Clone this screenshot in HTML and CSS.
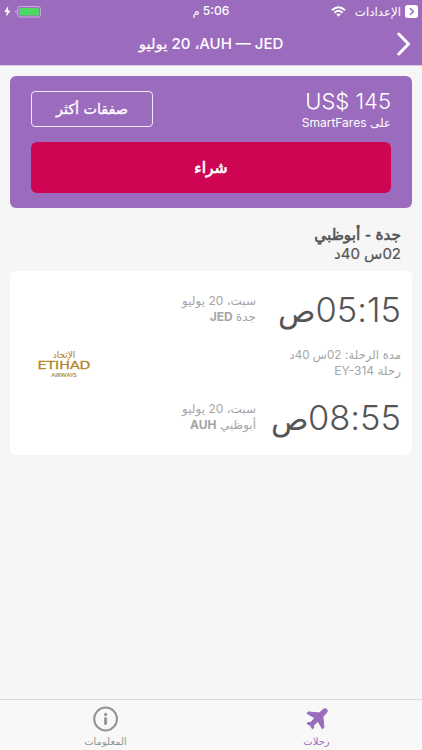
FILE: index.html
```html
<!DOCTYPE html>
<html lang="ar" dir="rtl">
<head>
  <meta charset="UTF-8" />
  <meta name="viewport" content="width=device-width, initial-scale=1.0" />
  <title>AUH — JED</title>
  <link rel="stylesheet" href="styles.css">
</head>
<body>
  <header class="header">
    <div class="status">
      <div class="status-side">
        <svg class="back-app" viewBox="0 0 13 13">
          <rect width="13" height="13" rx="2.5" fill="#fff" />
          <path d="M5 3.2L8.3 6.5L5 9.8" fill="none" stroke="#9b6cbd" stroke-width="1.6" />
        </svg>
        <span class="back-label">الإعدادات</span>
        <svg class="wifi" viewBox="0 0 15 11">
          <g fill="none" stroke="#fff" stroke-width="1.9">
            <path d="M1 4.2Q7.5 -1.9 14 4.2" />
            <path d="M3.4 6.7Q7.5 2.9 11.6 6.7" />
          </g>
          <path d="M5.2 8.3Q7.5 6.5 9.8 8.3L7.5 10.7Z" fill="#fff" />
        </svg>
      </div>
      <div class="clock">5:06 <span class="ar">م</span></div>
      <div class="status-side status-end">
        <svg class="battery" viewBox="0 0 26 12">
          <rect x="2.7" y=".6" width="22.7" height="10.4" rx="2" fill="none" stroke="#c9b3da" />
          <rect x="4.2" y="2" width="19.7" height="7.6" rx=".8" fill="#4cd964" />
          <path d="M1.4 4V7.6Q.1 7 .1 5.8T1.4 4Z" fill="#c9b3da" />
        </svg>
        <svg class="bolt" viewBox="0 0 7 11"><path d="M4.2 0L.3 5.9H2.8L2.1 10.8L6.5 4.5H3.9Z" fill="#fff" /></svg>
      </div>
    </div>
    <div class="navbar">
      <svg class="nav-back" viewBox="0 0 14 24"><path d="M1.8 2L11.5 12L1.8 22" fill="none" stroke="#fff" stroke-width="3" stroke-linecap="round" stroke-linejoin="round" /></svg>
      <h1 class="title"><bdi>AUH — JED</bdi><bdi class="ar">،</bdi> <bdi>20</bdi> <bdi class="ar">يوليو</bdi></h1>
    </div>
  </header>

  <main class="main">
    <section class="offer">
      <div class="offer-top">
        <div class="offer-info">
          <div class="price" dir="ltr">US$ 145</div>
          <div class="agency"><span class="ar">على</span> SmartFares</div>
        </div>
        <button class="more ar">صفقات أكثر</button>
      </div>
      <button class="buy ar">شراء</button>
    </section>

    <div class="route">
      <h2 class="route-name ar">جدة - أبوظبي</h2>
      <div class="route-time">02<span class="ar">س</span> 40<span class="ar">د</span></div>
    </div>

    <section class="flight">
      <div class="flight-stop">
        <div class="time">05:15<span class="ar">ص</span></div>
        <div class="place">
          <div><span class="ar">سبت،</span> 20 <span class="ar">يوليو</span></div>
          <div><span class="ar">جدة</span> <b>JED</b></div>
        </div>
      </div>
      <div class="flight-info">
        <div class="details">
          <div><span class="ar">مدة الرحلة:</span> 02<span class="ar">س</span> 40<span class="ar">د</span></div>
          <div class="flight-number"><span class="ar">رحلة</span> EY-314</div>
        </div>
        <div class="airline">
          <div class="airline-ar">الإتحاد</div>
          <div class="airline-name">ETIHAD</div>
          <div class="airline-sub">AIRWAYS</div>
        </div>
      </div>
      <div class="flight-stop">
        <div class="time">08:55<span class="ar">ص</span></div>
        <div class="place">
          <div><span class="ar">سبت،</span> 20 <span class="ar">يوليو</span></div>
          <div><span class="ar">أبوظبي</span> <b>AUH</b></div>
        </div>
      </div>
    </section>
  </main>

  <nav class="tabs">
    <a class="tab active">
      <svg class="tab-icon" viewBox="0 0 26 26"><path d="M22.7 3.2C21.6 2.2 19.7 2.7 18.6 3.8L15.4 7L4.2 5.9L3 7.4L10.8 11.9L6.6 16.6L3.9 16.4L3 17.6L6.5 19.6L8.4 22.9L9.6 22L9.5 19.4L14 15.2L18.4 22.9L19.9 21.6L18.9 10.6L22 7.5C23.2 6.3 23.7 4.2 22.7 3.2Z" fill="currentColor" stroke="currentColor" stroke-width="1" stroke-linejoin="round" /></svg>
      <span class="tab-label">رحلات</span>
    </a>
    <a class="tab">
      <svg class="tab-icon" viewBox="0 0 26 26">
        <circle cx="12.6" cy="13" r="11.4" fill="none" stroke="currentColor" stroke-width="2" />
        <circle cx="12.6" cy="8.4" r="1.6" fill="currentColor" />
        <path d="M12.6 12.6V17.5" stroke="currentColor" stroke-width="3" stroke-linecap="round" />
      </svg>
      <span class="tab-label">المعلومات</span>
    </a>
  </nav>
</body>
</html>
```
FILE: styles.css
```css
:root {
  --purple: #9b6cbd;
  --pink: #cd0552;
  --grey: #a5a5a5;
}

* {
  box-sizing: border-box;
}

body {
  margin: 0;
  height: 100vh;
  display: flex;
  flex-direction: column;
  overflow: hidden;
  font-family: Inter, "DejaVu Sans", sans-serif;
  background-color: #f6f6f6;
  color: #555;
}

svg {
  display: block;
  flex: none;
}

h1, h2 {
  margin: 0;
}

button {
  padding: 0;
  color: #fff;
  font-family: inherit;
}

.ar {
  font-family: "DejaVu Sans", sans-serif;
}

/* header */
.header {
  height: 66px;
  background: var(--purple);
  border-bottom: 1px solid #dccbe6;
  color: #fff;
}

.status {
  height: 22px;
  display: grid;
  grid-template-columns: 1fr auto 1fr;
  align-items: center;
  padding: 0 4px;
}

.status-side {
  display: flex;
  align-items: center;
}

.status-end {
  justify-content: flex-end;
  gap: 4px;
}

.back-app {
  width: 13px;
  height: 13px;
}

.back-label {
  margin: 0 4px 0 9px;
  font-size: 11.8px;
  line-height: 20px;
}

.wifi {
  width: 15px;
  height: 11px;
}

.clock {
  font-size: 12px;
  font-weight: 500;
  line-height: 22px;
}

.clock .ar {
  font-size: 11px;
}

.battery {
  width: 26px;
  height: 12px;
}

.bolt {
  width: 7px;
  height: 11px;
}

.navbar {
  height: 43px;
  display: grid;
  grid-template-columns: 20px 1fr 20px;
  align-items: center;
  padding: 0 11px;
}

.nav-back {
  width: 14px;
  height: 24px;
}

.title {
  text-align: center;
  font-size: 15px;
  font-weight: 500;
  line-height: 43px;
}

.title .ar {
  font-weight: normal;
  -webkit-text-stroke: 0.2px;
}

/* offer */
.main {
  flex: 1;
  padding: 10px 10.4px 0;
}

.offer {
  height: 132px;
  padding: 13px 20.6px 0;
  border-radius: 6px;
  background: var(--purple);
  color: #fff;
}

.offer-top {
  height: 53px;
  display: flex;
  justify-content: space-between;
}

.price {
  text-align: right;
  font-size: 22px;
  font-weight: 300;
  line-height: 25px;
}

.agency {
  font-size: 12px;
  line-height: 17px;
}

.more {
  width: 122px;
  height: 36px;
  margin-top: 2px;
  border: 1px solid #f4e9fb;
  border-radius: 4px;
  background: none;
  font-size: 14.3px;
  -webkit-text-stroke: 0.3px;
}

.buy {
  width: 100%;
  height: 51px;
  border: 0;
  border-radius: 6px;
  background: var(--pink);
  font-size: 15.6px;
  -webkit-text-stroke: 0.7px;
}

/* route */
.route {
  height: 63px;
  padding: 18px 10.6px 0;
}

.route-name {
  font-size: 15.3px;
  font-weight: normal;
  line-height: 18px;
  -webkit-text-stroke: 0.6px;
}

.route-time {
  font-size: 15px;
  line-height: 20px;
  -webkit-text-stroke: 0.2px;
}

/* flight */
.flight {
  height: 184px;
  padding: 15px 10.6px 0;
  border-radius: 6px;
  background: #fff;
}

.flight-stop {
  height: 47px;
  display: grid;
  grid-template-columns: 145px 1fr;
}

.time {
  font-size: 34.5px;
  font-weight: 300;
  line-height: 47px;
  letter-spacing: -1.1px;
  white-space: nowrap;
}

.time .ar {
  font-size: 31px;
  letter-spacing: 0;
}

.place,
.details {
  padding-top: 7px;
  font-size: 12px;
  line-height: 16px;
  color: var(--grey);
}

.flight-info {
  height: 61px;
  display: flex;
  justify-content: space-between;
}

.details {
  padding-top: 14px;
  font-size: 11.6px;
}

.flight-number {
  font-size: 12px;
}

.airline {
  width: 54px;
  margin: 17px 0 0 16px;
  text-align: center;
  color: #b5872b;
}

.airline-ar {
  font: 9px/10px "DejaVu Sans", sans-serif;
  -webkit-text-stroke: 0.1px;
}

.airline-name {
  font: 10.5px/10px "DejaVu Sans", sans-serif;
  transform: scaleX(1.35);
  -webkit-text-stroke: 0.3px;
}

.airline-sub {
  font: bold 5.8px/9px Lato, sans-serif;
}

/* tabs */
.tabs {
  height: 51px;
  display: flex;
  border-top: 1px solid #d9d9d9;
  background: #f8f8f8;
}

.tab {
  flex: 1;
  display: flex;
  flex-direction: column;
  align-items: center;
  padding-top: 6px;
  color: #949494;
}

.tab.active {
  color: var(--purple);
}

.tab-icon {
  width: 26px;
  height: 26px;
}

.tab-label {
  font: 10px/20px "DejaVu Sans", sans-serif;
}
```
